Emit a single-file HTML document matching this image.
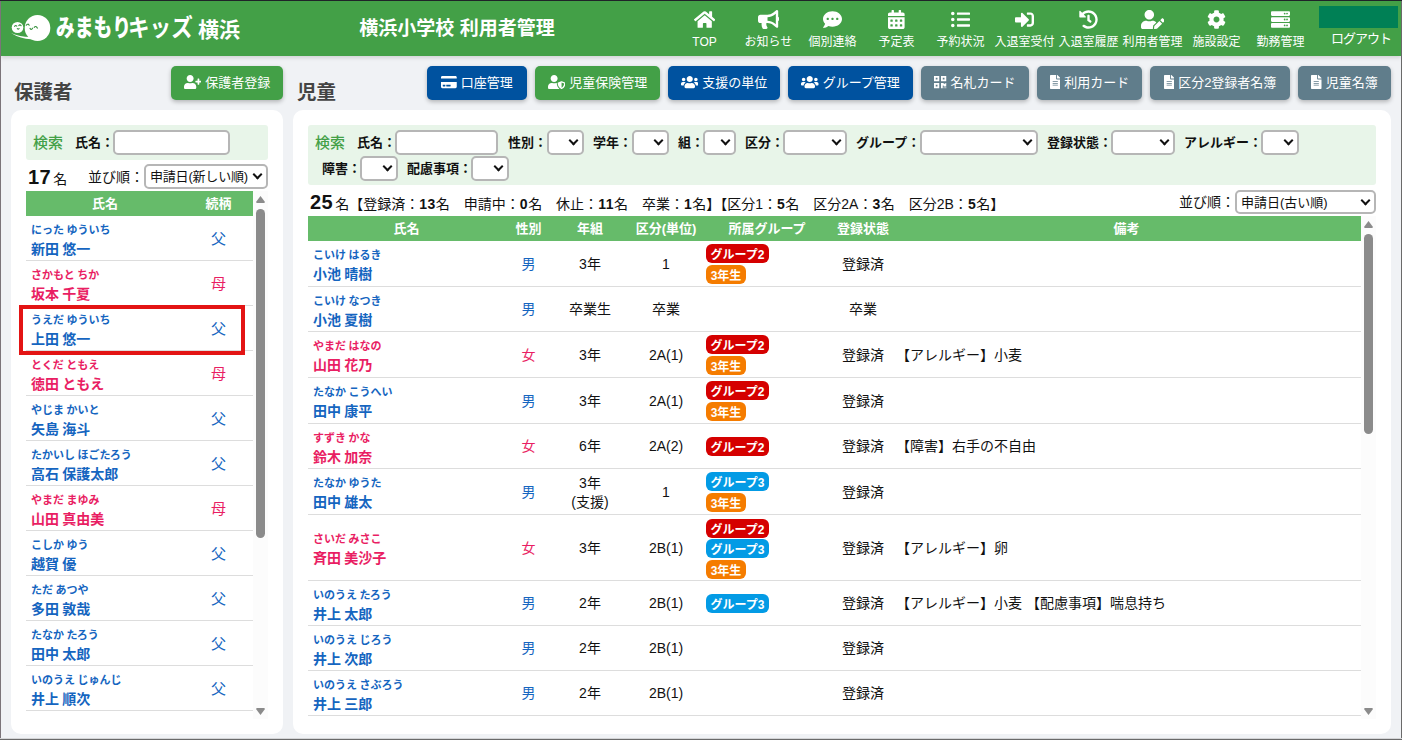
<!DOCTYPE html>
<html lang="ja">
<head>
<meta charset="utf-8">
<title>横浜小学校 利用者管理</title>
<style>
*{box-sizing:border-box;margin:0;padding:0}
html,body{width:1402px;height:740px;overflow:hidden}
body{font-family:"Liberation Sans","Noto Sans CJK JP",sans-serif;background:#f0f2f5;color:#111;position:relative;font-size:14px}
.abs{position:absolute}
#ftop{left:0;top:0;width:1402px;height:1px;background:#1f2328;z-index:50}
#fleft{left:0;top:1px;width:1px;height:739px;background:#7b7479;z-index:50}
#fright{left:1401px;top:1px;width:1px;height:739px;background:#6a6a6a;z-index:50}
#fbot{left:0;top:738px;width:1402px;height:2px;background:linear-gradient(180deg,#d4d5d7 0,#d4d5d7 50%,#6a6a6a 50%);z-index:50}
#hdr{left:1px;top:1px;width:1400px;height:55px;background:#43a047;box-shadow:0 2px 4px rgba(0,0,0,.13);z-index:10;color:#fff}
#logo-txt{left:55px;top:9px;font-weight:700;line-height:36px;height:36px;white-space:nowrap;font-size:0}
#logo-txt span{position:relative;display:inline-block;vertical-align:top;line-height:36px;height:36px;transform-origin:0 50%;overflow:visible}
#ttl{left:258px;top:10px;width:396px;text-align:center;font-size:19px;font-weight:700;line-height:36px;white-space:nowrap}
.nav{top:0;width:64px;height:55px;text-align:center}
.nav svg{position:absolute;left:0;right:0;margin:0 auto;top:9px;fill:#fff}
.nav span{position:absolute;left:-10px;right:-10px;top:31px;font-size:12px;line-height:20px;white-space:nowrap}
#lo-box{left:1318px;top:5px;width:79px;height:22px;background:#008055}
#lo-txt{left:1321px;top:28px;width:78px;text-align:center;font-size:13px;line-height:20px;white-space:nowrap;letter-spacing:-1px}
.sect{font-size:19.5px;font-weight:700;color:#444;line-height:30px;top:77px}
.btn{top:66px;height:34px;border-radius:5px;color:#fff;font-size:13px;line-height:34px;text-align:center;white-space:nowrap;box-shadow:0 2px 4px rgba(0,0,0,.25);}
.btn svg{display:inline-block;vertical-align:-2px;fill:#fff;margin-right:4px}
.g{background:#43a047}.b{background:#00529f}.s{background:#607d8b}
.card{background:#fff;border-radius:10px;top:110px;height:624px}
.srch{background:#e8f5e9;border-radius:3px}
.k{color:#43a047;font-weight:500;font-size:15px;line-height:20px;white-space:nowrap}
.lbl{font-weight:700;font-size:13px;line-height:20px;white-space:nowrap}
.inp{background:#fff;border:2px solid #b6b6b6;border-radius:5px;height:25px}
.sel{background:#fff;border:2px solid #b6b6b6;border-radius:5px;height:25px;font-size:13.5px;line-height:21px;padding-left:4px;white-space:nowrap;overflow:hidden}
.sel i{position:absolute;right:5.5px;top:4.5px;width:7px;height:7px;border-right:2px solid #111;border-bottom:2px solid #111;transform:rotate(45deg);}
.cnt{font-size:14px;line-height:24px;white-space:nowrap}
.cnt b.big{font-size:20px}
.cnt b{font-weight:700;letter-spacing:.5px}
.th{background:#66bb6a;color:#fff;font-weight:700;font-size:13px;line-height:24px;text-align:center;white-space:nowrap}
.sb{background:#fcfcfc}
.sb .thumb{position:absolute;left:3px;width:9px;background:#8b8b8b;border-radius:4.5px}
.sb .up{position:absolute;left:3px;width:9px;height:7px;background:#8b8b8b;clip-path:polygon(50% 0,100% 85%,92% 100%,8% 100%,0 85%)}
.sb .dn{position:absolute;left:3px;width:9px;height:7px;background:#8b8b8b;clip-path:polygon(8% 0,92% 0,100% 15%,50% 100%,0 15%)}
.row{border-bottom:1px solid #ddd}
.m{color:#1565c0}.f{color:#e91e63}
.kana{font-size:11px;font-weight:700;line-height:16px;white-space:nowrap;word-spacing:-.6px}
.nm{font-size:14px;font-weight:700;line-height:20px;white-space:nowrap;word-spacing:-.7px}
.rel{font-size:15px;line-height:20px;text-align:center}
.c{position:absolute;text-align:center;font-size:14px;line-height:19px;white-space:nowrap}
.bd{position:absolute;left:706px;height:19px;border-radius:6px;color:#fff;font-size:12px;font-weight:700;line-height:22px;overflow:hidden;text-align:center;white-space:nowrap}
.r{background:#d50000}.bl{background:#039be5}.o{background:#f57c00}
</style>
</head>
<body>
<div id="ftop" class="abs"></div><div id="fleft" class="abs"></div><div id="fright" class="abs"></div><div id="fbot" class="abs"></div>
<div id="hdr" class="abs">
<svg class="abs" style="left:9px;top:12px" width="42" height="32" viewBox="0 0 42 32">
<ellipse cx="7.5" cy="14.5" rx="5.8" ry="5.6" fill="#fff"/>
<ellipse cx="27.5" cy="15" rx="12.8" ry="13" fill="#fff"/>
<path d="M1 20 Q12 27 24 26 L20 24 Q10 24 1 20Z" fill="#fff"/>
<path d="M16.200 12.300q1.600-2.200 3-.1M20 15.400q1.300 2 2.600-.2M24.200 14.400q1.600-2 3.200 .7M4.600 13.400q1-1.600 2.200-.2M8.800 12.600q1.100-1.500 2.300 .1M7.300 15.500q.9 1.300 1.800 0" stroke="#3a9440" stroke-width="1.100" fill="none" stroke-linecap="round"/>
</svg>
<div id="logo-txt" class="abs"><span style="width:72px;font-size:24px;font-weight:900;transform:scaleX(.78)">みまもり</span><span style="width:70px;font-size:24px;transform:scaleX(.9)">キッズ</span><span style="width:44px;font-size:21px;top:2px">横浜</span></div>
<div id="ttl" class="abs">横浜小学校 利用者管理</div>
<div class="abs nav" style="left:671.5px"><svg viewBox="0 0 576 512" width="21.38" height="19" style=""><path d="M280.37 148.26L96 300.11V464a16 16 0 0 0 16 16l112.06-.29a16 16 0 0 0 15.92-16V368a16 16 0 0 1 16-16h64a16 16 0 0 1 16 16v95.64a16 16 0 0 0 16 16.05L464 480a16 16 0 0 0 16-16V300L295.67 148.26a12.19 12.19 0 0 0-15.3 0zM571.6 251.47L488 182.56V44.05a12 12 0 0 0-12-12h-56a12 12 0 0 0-12 12v72.61L318.47 43a48 48 0 0 0-61 0L4.34 251.47a12 12 0 0 0-1.6 16.9l25.5 31A12 12 0 0 0 45.15 301l235.22-193.74a12.19 12.19 0 0 1 15.3 0L530.9 301a12 12 0 0 0 16.9-1.6l25.5-31a12 12 0 0 0-1.7-16.93z"/></svg><span>TOP</span></div>
<div class="abs nav" style="left:735.5px"><svg viewBox="0 0 576 512" width="21.38" height="19" style=""><path d="M576 240c0-23.63-12.95-44.04-32-55.12V32.01C544 23.26 537.02 0 512 0c-7.12 0-14.19 2.38-19.98 7.02l-85.03 68.03C364.28 109.19 310.66 128 256 128H64c-35.35 0-64 28.65-64 64v96c0 35.35 28.65 64 64 64h33.7c-1.39 10.48-2.18 21.14-2.18 32 0 39.77 9.26 77.35 25.56 110.94 5.19 10.69 16.52 17.06 28.4 17.06h74.28c26.05 0 41.69-29.84 25.9-50.56-16.4-21.52-26.15-48.36-26.15-77.44 0-11.11 1.62-21.79 4.41-32H256c54.66 0 108.28 18.81 150.98 52.95l85.03 68.03a32.023 32.023 0 0 0 19.98 7.02c24.92 0 32-22.78 32-32V295.13C563.05 284.04 576 263.63 576 240zm-96 141.42l-33.05-26.44C392.95 311.78 325.12 288 256 288v-96c69.12 0 136.95-23.78 190.95-66.98L480 98.58v282.84z"/></svg><span>お知らせ</span></div>
<div class="abs nav" style="left:799.5px"><svg viewBox="0 0 512 512" width="19.0" height="19" style=""><path d="M256 32C114.6 32 0 125.1 0 240c0 49.6 21.4 95 57 130.7C44.5 421.1 2.7 466 2.2 466.5c-2.2 2.3-2.8 5.7-1.5 8.7S4.8 480 8 480c66.3 0 116-31.8 140.6-51.4 32.7 12.3 69 19.4 107.4 19.4 141.4 0 256-93.1 256-208S397.4 32 256 32zM128 272c-17.7 0-32-14.3-32-32s14.3-32 32-32 32 14.3 32 32-14.3 32-32 32zm128 0c-17.7 0-32-14.3-32-32s14.3-32 32-32 32 14.3 32 32-14.3 32-32 32zm128 0c-17.7 0-32-14.3-32-32s14.3-32 32-32 32 14.3 32 32-14.3 32-32 32z"/></svg><span>個別連絡</span></div>
<div class="abs nav" style="left:863.5px"><svg viewBox="0 0 448 512" width="16.62" height="19" style=""><path d="M0 464c0 26.5 21.5 48 48 48h352c26.5 0 48-21.5 48-48V192H0v272zm320-196c0-6.6 5.4-12 12-12h40c6.6 0 12 5.4 12 12v40c0 6.6-5.4 12-12 12h-40c-6.6 0-12-5.4-12-12v-40zm0 128c0-6.6 5.4-12 12-12h40c6.6 0 12 5.4 12 12v40c0 6.6-5.4 12-12 12h-40c-6.6 0-12-5.4-12-12v-40zM192 268c0-6.6 5.4-12 12-12h40c6.6 0 12 5.4 12 12v40c0 6.6-5.4 12-12 12h-40c-6.6 0-12-5.4-12-12v-40zm0 128c0-6.6 5.4-12 12-12h40c6.6 0 12 5.4 12 12v40c0 6.6-5.4 12-12 12h-40c-6.6 0-12-5.4-12-12v-40zM64 268c0-6.6 5.4-12 12-12h40c6.6 0 12 5.4 12 12v40c0 6.6-5.4 12-12 12H76c-6.6 0-12-5.4-12-12v-40zm0 128c0-6.6 5.4-12 12-12h40c6.6 0 12 5.4 12 12v40c0 6.6-5.4 12-12 12H76c-6.6 0-12-5.4-12-12v-40zM400 64h-48V16c0-8.8-7.2-16-16-16h-32c-8.8 0-16 7.2-16 16v48H160V16c0-8.800-7.2-16-16-16h-32c-8.8 0-16 7.2-16 16v48H48C21.5 64 0 85.5 0 112v48h448v-48c0-26.5-21.5-48-48-48z"/></svg><span>予定表</span></div>
<div class="abs nav" style="left:927.5px"><svg viewBox="0 0 512 512" width="19.0" height="19" style=""><path d="M48 48a48 48 0 1 0 48 48 48 48 0 0 0-48-48zm0 160a48 48 0 1 0 48 48 48 48 0 0 0-48-48zm0 160a48 48 0 1 0 48 48 48 48 0 0 0-48-48zm448 16H176a16 16 0 0 0-16 16v32a16 16 0 0 0 16 16h320a16 16 0 0 0 16-16v-32a16 16 0 0 0-16-16zm0-320H176a16 16 0 0 0-16 16v32a16 16 0 0 0 16 16h320a16 16 0 0 0 16-16V80a16 16 0 0 0-16-16zm0 160H176a16 16 0 0 0-16 16v32a16 16 0 0 0 16 16h320a16 16 0 0 0 16-16v-32a16 16 0 0 0-16-16z"/></svg><span>予約状況</span></div>
<div class="abs nav" style="left:991.5px"><svg viewBox="0 0 512 512" width="19.0" height="19" style=""><path d="M416 448h-84c-6.6 0-12-5.4-12-12v-40c0-6.6 5.4-12 12-12h84c17.7 0 32-14.3 32-32V160c0-17.7-14.3-32-32-32h-84c-6.6 0-12-5.4-12-12V76c0-6.6 5.4-12 12-12h84c53 0 96 43 96 96v192c0 53-43 96-96 96zm-47-201L201 79c-15-15-41-4.5-41 17v96H24c-13.3 0-24 10.7-24 24v96c0 13.3 10.7 24 24 24h136v96c0 21.5 26 32 41 17l168-168c9.3-9.4 9.3-24.6 0-34z"/></svg><span>入退室受付</span></div>
<div class="abs nav" style="left:1055.5px"><svg viewBox="0 0 512 512" width="19.0" height="19" style=""><path d="M504 255.531c.253 136.64-111.18 248.372-247.82 248.468-59.015.042-113.223-20.53-155.822-54.911-11.077-8.94-11.905-25.541-1.839-35.607l11.267-11.267c8.609-8.609 22.353-9.551 31.891-1.984C173.062 425.135 212.781 440 256 440c101.705 0 184-82.311 184-184 0-101.705-82.311-184-184-184-48.814 0-93.149 18.969-126.068 49.932l50.754 50.754c10.08 10.08 2.941 27.314-11.313 27.314H24c-8.837 0-16-7.163-16-16V38.627c0-14.254 17.234-21.393 27.314-11.314l49.372 49.372C129.209 34.136 189.552 8 256 8c136.81 0 247.747 110.78 248 247.531zm-180.912 78.784l9.823-12.63c8.138-10.463 6.253-25.542-4.21-33.679L288 256.349V152c0-13.255-10.745-24-24-24h-16c-13.255 0-24 10.745-24 24v135.651l65.409 50.874c10.463 8.137 25.541 6.253 33.679-4.21z"/></svg><span>入退室履歴</span></div>
<div class="abs nav" style="left:1119.5px"><svg viewBox="0 0 640 512" width="23.75" height="19" style=""><path d="M224 256c70.7 0 128-57.3 128-128S294.7 0 224 0 96 57.3 96 128s57.3 128 128 128zm89.6 32h-16.700c-22.2 10.2-46.9 16-72.9 16s-50.6-5.8-72.9-16h-16.700C60.2 288 0 348.2 0 422.4V464c0 26.5 21.5 48 48 48h274.9c-2.4-6.8-3.4-14-2.6-21.3l6.8-60.9 1.2-11.1 7.9-7.9 77.3-77.3c-24.5-27.7-60-45.5-99.9-45.500zm45.3 145.3l-6.8 61c-1.1 10.2 7.5 18.8 17.6 17.6l60.9-6.8 137.9-137.9-71.700-71.700-137.9 137.8zM633 268.9L595.1 231c-9.3-9.3-24.5-9.3-33.8 0l-37.8 37.8-4.1 4.1 71.800 71.700 41.800-41.800c9.3-9.4 9.3-24.5 0-33.900z"/></svg><span>利用者管理</span></div>
<div class="abs nav" style="left:1183.5px"><svg viewBox="0 0 512 512" width="19.0" height="19" style=""><path d="M487.4 315.7l-42.6-24.6c4.3-23.2 4.3-47 0-70.2l42.6-24.6c4.9-2.8 7.1-8.6 5.5-14-11.1-35.6-30-67.8-54.700-94.600-3.800-4.100-10-5.100-14.800-2.300L380.800 110c-17.900-15.400-38.500-27.300-60.800-35.100V25.800c0-5.600-3.900-10.500-9.400-11.700-36.700-8.200-74.300-7.800-109.200 0-5.500 1.200-9.400 6.100-9.400 11.700V75c-22.200 7.900-42.800 19.800-60.800 35.100L88.700 85.500c-4.900-2.800-11-1.900-14.800 2.300-24.700 26.700-43.600 58.900-54.700 94.600-1.700 5.400.6 11.200 5.500 14L67.300 221c-4.300 23.200-4.300 47 0 70.200l-42.600 24.600c-4.900 2.800-7.100 8.600-5.500 14 11.100 35.600 30 67.800 54.700 94.600 3.800 4.100 10 5.100 14.800 2.300l42.600-24.600c17.900 15.400 38.500 27.300 60.800 35.100v49.200c0 5.600 3.900 10.500 9.400 11.700 36.700 8.200 74.300 7.800 109.200 0 5.500-1.200 9.400-6.100 9.400-11.700v-49.200c22.200-7.900 42.800-19.800 60.800-35.100l42.600 24.600c4.900 2.800 11 1.900 14.800-2.300 24.700-26.700 43.600-58.900 54.700-94.600 1.500-5.500-.7-11.300-5.600-14.100zM256 336c-44.100 0-80-35.900-80-80s35.900-80 80-80 80 35.900 80 80-35.900 80-80 80z"/></svg><span>施設設定</span></div>
<div class="abs nav" style="left:1247.5px"><svg viewBox="0 0 512 512" width="19.0" height="19" style=""><path d="M480 160H32c-17.673 0-32-14.327-32-32V64c0-17.673 14.327-32 32-32h448c17.673 0 32 14.327 32 32v64c0 17.673-14.327 32-32 32zm-48-88c-13.255 0-24 10.745-24 24s10.745 24 24 24 24-10.745 24-24-10.745-24-24-24zm-64 0c-13.255 0-24 10.745-24 24s10.745 24 24 24 24-10.745 24-24-10.745-24-24-24zm112 248H32c-17.673 0-32-14.327-32-32v-64c0-17.673 14.327-32 32-32h448c17.673 0 32 14.327 32 32v64c0 17.673-14.327 32-32 32zm-48-88c-13.255 0-24 10.745-24 24s10.745 24 24 24 24-10.745 24-24-10.745-24-24-24zm-64 0c-13.255 0-24 10.745-24 24s10.745 24 24 24 24-10.745 24-24-10.745-24-24-24zm112 248H32c-17.673 0-32-14.327-32-32v-64c0-17.673 14.327-32 32-32h448c17.673 0 32 14.327 32 32v64c0 17.673-14.327 32-32 32zm-48-88c-13.255 0-24 10.745-24 24s10.745 24 24 24 24-10.745 24-24-10.745-24-24-24zm-64 0c-13.255 0-24 10.745-24 24s10.745 24 24 24 24-10.745 24-24-10.745-24-24-24z"/></svg><span>勤務管理</span></div>
<div id="lo-box" class="abs"></div><div id="lo-txt" class="abs">ログアウト</div>
</div>
<div class="abs sect" style="left:14px">保護者</div>
<div class="abs sect" style="left:297px">児童</div>
<div class="abs btn g" style="left:171px;width:112px;font-size:13px"><svg viewBox="0 0 640 512" width="17.5" height="14" style=""><path d="M624 208h-64v-64c0-8.8-7.2-16-16-16h-32c-8.8 0-16 7.2-16 16v64h-64c-8.8 0-16 7.2-16 16v32c0 8.8 7.2 16 16 16h64v64c0 8.8 7.2 16 16 16h32c8.8 0 16-7.2 16-16v-64h64c8.8 0 16-7.2 16-16v-32c0-8.8-7.2-16-16-16zm-400 48c70.7 0 128-57.3 128-128S294.7 0 224 0 96 57.3 96 128s57.3 128 128 128zm89.6 32h-16.7c-22.2 10.2-46.9 16-72.9 16s-50.6-5.8-72.9-16h-16.7C60.2 288 0 348.2 0 422.4V464c0 26.5 21.5 48 48 48h352c26.5 0 48-21.5 48-48v-41.6c0-74.2-60.2-134.4-134.4-134.4z"/></svg>保護者登録</div>
<div class="abs btn b" style="left:427px;width:100px;font-size:13px"><svg viewBox="0 0 576 512" width="15.75" height="14" style=""><path d="M0 432c0 26.5 21.5 48 48 48h480c26.5 0 48-21.5 48-48V256H0v176zm192-68c0-6.600 5.4-12 12-12h136c6.6 0 12 5.4 12 12v40c0 6.6-5.4 12-12 12H204c-6.6 0-12-5.4-12-12v-40zm-128 0c0-6.6 5.4-12 12-12h72c6.6 0 12 5.4 12 12v40c0 6.6-5.4 12-12 12H76c-6.6 0-12-5.4-12-12v-40zM576 80v48H0V80c0-26.5 21.5-48 48-48h480c26.5 0 48 21.5 48 48z"/></svg>口座管理</div>
<div class="abs btn g" style="left:535px;width:125px;font-size:13px"><svg viewBox="0 0 640 512" width="17.5" height="14" style=""><path d="M622.3 271.1l-115.200-45c-4.100-1.600-12.600-3.700-22.200 0l-115.200 45c-10.700 4.200-17.700 14-17.700 24.900 0 111.600 68.700 188.800 132.900 213.900 9.600 3.700 18 1.600 22.200 0C558.4 489.9 640 420.5 640 296c0-10.900-7-20.700-17.700-24.900zM496 462.4V273.3l95.500 37.300c-5.600 87.100-60.900 135.400-95.500 151.800zM224 256c70.700 0 128-57.300 128-128S294.7 0 224 0 96 57.3 96 128s57.3 128 128 128zm96 40c0-2.500.8-4.800 1.100-7.200-2.500-.1-4.900-.8-7.500-.8h-16.700c-22.2 10.2-46.900 16-72.900 16s-50.600-5.800-72.900-16h-16.700C60.2 288 0 348.2 0 422.4V464c0 26.500 21.500 48 48 48h352c6.800 0 13.300-1.500 19.200-4-54-42.900-99.200-116.700-99.200-212z"/></svg>児童保険管理</div>
<div class="abs btn b" style="left:668px;width:112px;font-size:13px"><svg viewBox="0 0 640 512" width="17.5" height="14" style=""><path d="M96 224c35.3 0 64-28.7 64-64s-28.7-64-64-64-64 28.7-64 64 28.7 64 64 64zm448 0c35.3 0 64-28.7 64-64s-28.7-64-64-64-64 28.7-64 64 28.7 64 64 64zm32 32h-64c-17.600 0-33.500 7.100-45.100 18.600 40.300 22.100 68.900 62 75.100 109.400h66c17.700 0 32-14.300 32-32v-32c0-35.300-28.700-64-64-64zm-256 0c61.900 0 112-50.100 112-112S381.9 32 320 32 208 82.1 208 144s50.100 112 112 112zm76.800 32h-8.300c-20.800 10-43.900 16-68.500 16s-47.600-6-68.500-16h-8.300C179.6 288 128 339.6 128 403.2V432c0 26.500 21.500 48 48 48h288c26.500 0 48-21.500 48-48v-28.800c0-63.600-51.600-115.200-115.200-115.200zm-223.700-13.400C161.5 263.1 145.6 256 128 256H64c-35.3 0-64 28.700-64 64v32c0 17.700 14.300 32 32 32h65.900c6.300-47.400 34.900-87.300 75.200-109.400z"/></svg>支援の単位</div>
<div class="abs btn b" style="left:788px;width:125px;font-size:13px"><svg viewBox="0 0 640 512" width="17.5" height="14" style=""><path d="M96 224c35.3 0 64-28.7 64-64s-28.7-64-64-64-64 28.7-64 64 28.7 64 64 64zm448 0c35.3 0 64-28.7 64-64s-28.7-64-64-64-64 28.7-64 64 28.7 64 64 64zm32 32h-64c-17.600 0-33.500 7.100-45.100 18.600 40.300 22.100 68.900 62 75.100 109.400h66c17.700 0 32-14.300 32-32v-32c0-35.300-28.700-64-64-64zm-256 0c61.900 0 112-50.100 112-112S381.9 32 320 32 208 82.1 208 144s50.100 112 112 112zm76.800 32h-8.300c-20.800 10-43.900 16-68.500 16s-47.600-6-68.500-16h-8.300C179.6 288 128 339.6 128 403.2V432c0 26.500 21.500 48 48 48h288c26.500 0 48-21.500 48-48v-28.800c0-63.600-51.600-115.200-115.200-115.200zm-223.700-13.400C161.5 263.1 145.6 256 128 256H64c-35.3 0-64 28.700-64 64v32c0 17.700 14.300 32 32 32h65.900c6.300-47.400 34.900-87.300 75.200-109.400z"/></svg>グループ管理</div>
<div class="abs btn s" style="left:921px;width:108px;font-size:13px"><svg viewBox="0 0 448 512" width="12.25" height="14" style=""><path d="M0 224h192V32H0v192zM64 96h64v64H64V96zm192-64v192h192V32H256zm128 128h-64V96h64v64zM0 480h192V288H0v192zm64-128h64v64H64v-64zm352-64h32v128h-96v-32h-32v96h-64V288h96v32h64v-32zm0 160h32v32h-32v-32zm-64 0h32v32h-32v-32z"/></svg>名札カード</div>
<div class="abs btn s" style="left:1037px;width:105px;font-size:13px"><svg viewBox="0 0 384 512" width="10.5" height="14" style=""><path d="M224 136V0H24C10.7 0 0 10.7 0 24v464c0 13.3 10.7 24 24 24h336c13.300 0 24-10.700 24-24V160H248c-13.200 0-24-10.800-24-24zm64 236c0 6.600-5.400 12-12 12H108c-6.600 0-12-5.400-12-12v-8c0-6.600 5.400-12 12-12h168c6.600 0 12 5.400 12 12v8zm0-64c0 6.600-5.400 12-12 12H108c-6.600 0-12-5.400-12-12v-8c0-6.600 5.400-12 12-12h168c6.600 0 12 5.400 12 12v8zm0-72v8c0 6.600-5.400 12-12 12H108c-6.600 0-12-5.400-12-12v-8c0-6.600 5.400-12 12-12h168c6.600 0 12 5.400 12 12zm96-114.100v6.100H256V0h6.100c6.400 0 12.500 2.500 17 7l97.900 98c4.500 4.500 7 10.600 7 16.900z"/></svg>利用カード</div>
<div class="abs btn s" style="left:1150px;width:140px;font-size:13px"><svg viewBox="0 0 384 512" width="10.5" height="14" style=""><path d="M224 136V0H24C10.7 0 0 10.7 0 24v464c0 13.3 10.7 24 24 24h336c13.300 0 24-10.700 24-24V160H248c-13.200 0-24-10.800-24-24zm64 236c0 6.600-5.400 12-12 12H108c-6.600 0-12-5.400-12-12v-8c0-6.600 5.400-12 12-12h168c6.600 0 12 5.400 12 12v8zm0-64c0 6.600-5.400 12-12 12H108c-6.600 0-12-5.400-12-12v-8c0-6.600 5.400-12 12-12h168c6.600 0 12 5.400 12 12v8zm0-72v8c0 6.600-5.400 12-12 12H108c-6.600 0-12-5.400-12-12v-8c0-6.600 5.400-12 12-12h168c6.600 0 12 5.400 12 12zm96-114.100v6.100H256V0h6.100c6.400 0 12.500 2.500 17 7l97.900 98c4.500 4.500 7 10.600 7 16.900z"/></svg>区分2登録者名簿</div>
<div class="abs btn s" style="left:1298px;width:93px;font-size:13px"><svg viewBox="0 0 384 512" width="10.5" height="14" style=""><path d="M224 136V0H24C10.7 0 0 10.7 0 24v464c0 13.3 10.7 24 24 24h336c13.300 0 24-10.700 24-24V160H248c-13.200 0-24-10.800-24-24zm64 236c0 6.600-5.400 12-12 12H108c-6.600 0-12-5.400-12-12v-8c0-6.600 5.400-12 12-12h168c6.600 0 12 5.400 12 12v8zm0-64c0 6.600-5.400 12-12 12H108c-6.600 0-12-5.400-12-12v-8c0-6.600 5.400-12 12-12h168c6.600 0 12 5.400 12 12v8zm0-72v8c0 6.600-5.400 12-12 12H108c-6.600 0-12-5.400-12-12v-8c0-6.600 5.400-12 12-12h168c6.600 0 12 5.400 12 12zm96-114.100v6.100H256V0h6.100c6.400 0 12.500 2.500 17 7l97.900 98c4.500 4.500 7 10.600 7 16.900z"/></svg>児童名簿</div>
<div class="abs card" style="left:11px;width:272px">
<div class="abs srch" style="left:15px;top:15px;width:242px;height:35px"></div>
<div class="abs k" style="left:22px;top:23px">検索</div>
<div class="abs lbl" style="left:64px;top:23px">氏名：</div>
<div class="abs inp" style="left:102px;top:20px;width:117px"></div>
<div class="abs cnt" style="left:17px;top:55px"><b class="big">17</b><span style="margin-left:2px">名</span></div>
<div class="abs cnt" style="left:77px;top:55px;font-size:14px">並び順：</div>
<div class="abs sel" style="left:133px;top:54px;width:124px;height:25px"><span style="font-size:13px;letter-spacing:-.2px">申請日(新しい順)</span><i></i></div>
<div class="abs th" style="left:15px;top:81px;width:227px;height:25px;line-height:26px"><span class="abs" style="left:0;width:158px">氏名</span><span class="abs" style="left:158px;width:69px">続柄</span></div>
<div class="abs sb" style="left:242px;top:81px;width:15px;height:528px"><div class="up" style="top:5px"></div><div class="thumb" style="top:18px;height:329px"></div><div class="dn" style="top:517px"></div></div>
<div class="abs row m" style="left:15px;top:106px;width:227px;height:45px"><div class="abs kana" style="left:5px;top:6px">にった ゆういち</div><div class="abs nm" style="left:5px;top:22.5px">新田 悠一</div><div class="abs rel" style="left:158px;top:13px;width:69px">父</div></div>
<div class="abs row f" style="left:15px;top:151px;width:227px;height:45px"><div class="abs kana" style="left:5px;top:6px">さかもと ちか</div><div class="abs nm" style="left:5px;top:22.5px">坂本 千夏</div><div class="abs rel" style="left:158px;top:13px;width:69px">母</div></div>
<div class="abs row m" style="left:15px;top:196px;width:227px;height:45px"><div class="abs kana" style="left:5px;top:6px">うえだ ゆういち</div><div class="abs nm" style="left:5px;top:22.5px">上田 悠一</div><div class="abs rel" style="left:158px;top:13px;width:69px">父</div></div>
<div class="abs row f" style="left:15px;top:241px;width:227px;height:45px"><div class="abs kana" style="left:5px;top:6px">とくだ ともえ</div><div class="abs nm" style="left:5px;top:22.5px">徳田 ともえ</div><div class="abs rel" style="left:158px;top:13px;width:69px">母</div></div>
<div class="abs row m" style="left:15px;top:286px;width:227px;height:45px"><div class="abs kana" style="left:5px;top:6px">やじま かいと</div><div class="abs nm" style="left:5px;top:22.5px">矢島 海斗</div><div class="abs rel" style="left:158px;top:13px;width:69px">父</div></div>
<div class="abs row m" style="left:15px;top:331px;width:227px;height:45px"><div class="abs kana" style="left:5px;top:6px">たかいし ほごたろう</div><div class="abs nm" style="left:5px;top:22.5px">高石 保護太郎</div><div class="abs rel" style="left:158px;top:13px;width:69px">父</div></div>
<div class="abs row f" style="left:15px;top:376px;width:227px;height:45px"><div class="abs kana" style="left:5px;top:6px">やまだ まゆみ</div><div class="abs nm" style="left:5px;top:22.5px">山田 真由美</div><div class="abs rel" style="left:158px;top:13px;width:69px">母</div></div>
<div class="abs row m" style="left:15px;top:421px;width:227px;height:45px"><div class="abs kana" style="left:5px;top:6px">こしか ゆう</div><div class="abs nm" style="left:5px;top:22.5px">越賀 優</div><div class="abs rel" style="left:158px;top:13px;width:69px">父</div></div>
<div class="abs row m" style="left:15px;top:466px;width:227px;height:45px"><div class="abs kana" style="left:5px;top:6px">ただ あつや</div><div class="abs nm" style="left:5px;top:22.5px">多田 敦哉</div><div class="abs rel" style="left:158px;top:13px;width:69px">父</div></div>
<div class="abs row m" style="left:15px;top:511px;width:227px;height:45px"><div class="abs kana" style="left:5px;top:6px">たなか たろう</div><div class="abs nm" style="left:5px;top:22.5px">田中 太郎</div><div class="abs rel" style="left:158px;top:13px;width:69px">父</div></div>
<div class="abs row m" style="left:15px;top:556px;width:227px;height:45px"><div class="abs kana" style="left:5px;top:6px">いのうえ じゅんじ</div><div class="abs nm" style="left:5px;top:22.5px">井上 順次</div><div class="abs rel" style="left:158px;top:13px;width:69px">父</div></div>
<div class="abs" style="left:8px;top:195px;width:226px;height:50px;border:4px solid #e31414"></div>
</div>
<div class="abs card" style="left:293px;width:1098px">
<div class="abs srch" style="left:15px;top:15px;width:1068px;height:60px"></div>
<div class="abs k" style="left:22px;top:23px">検索</div>
<div class="abs lbl" style="left:64px;top:23px">氏名：</div>
<div class="abs inp" style="left:102px;top:20px;width:103px"></div>
<div class="abs lbl" style="left:215px;top:23px">性別：</div>
<div class="abs sel" style="left:254px;top:20px;width:37px;height:25px"><i></i></div>
<div class="abs lbl" style="left:300px;top:23px">学年：</div>
<div class="abs sel" style="left:339px;top:20px;width:37px;height:25px"><i></i></div>
<div class="abs lbl" style="left:385px;top:23px">組：</div>
<div class="abs sel" style="left:410px;top:20px;width:33px;height:25px"><i></i></div>
<div class="abs lbl" style="left:452px;top:23px">区分：</div>
<div class="abs sel" style="left:490px;top:20px;width:64px;height:25px"><i></i></div>
<div class="abs lbl" style="left:563px;top:23px">グループ：</div>
<div class="abs sel" style="left:627px;top:20px;width:118px;height:25px"><i></i></div>
<div class="abs lbl" style="left:754px;top:23px">登録状態：</div>
<div class="abs sel" style="left:818px;top:20px;width:64px;height:25px"><i></i></div>
<div class="abs lbl" style="left:891px;top:23px">アレルギー：</div>
<div class="abs sel" style="left:968px;top:20px;width:38px;height:25px"><i></i></div>
<div class="abs lbl" style="left:29px;top:49px">障害：</div>
<div class="abs sel" style="left:67px;top:46px;width:38px;height:25px"><i></i></div>
<div class="abs lbl" style="left:114px;top:49px">配慮事項：</div>
<div class="abs sel" style="left:178px;top:46px;width:38px;height:25px"><i></i></div>
<div class="abs cnt" style="left:17px;top:80px"><b class="big">25</b><span style="margin-left:2px">名</span>【登録済：<b>13</b>名　申請中：<b>0</b>名　休止：<b>11</b>名　卒業：<b>1</b>名】【区分1：<b>5</b>名　区分2A：<b>3</b>名　区分2B：<b>5</b>名】</div>
<div class="abs cnt" style="left:886px;top:80px">並び順：</div>
<div class="abs sel" style="left:942px;top:80px;width:141px;height:24px"><span style="font-size:13px">申請日(古い順)</span><i></i></div>
<div class="abs th" style="left:15px;top:106px;width:1053px;height:25px;line-height:26px">
<span class="abs" style="left:0px;width:197px">氏名</span>
<span class="abs" style="left:197px;width:47px">性別</span>
<span class="abs" style="left:244px;width:76px">年組</span>
<span class="abs" style="left:320px;width:76px">区分(単位)</span>
<span class="abs" style="left:396px;width:126px">所属グループ</span>
<span class="abs" style="left:522px;width:66px">登録状態</span>
<span class="abs" style="left:588px;width:461px">備考</span>
</div>
<div class="abs sb" style="left:1068px;top:106px;width:15px;height:503px"><div class="up" style="top:5px"></div><div class="thumb" style="top:18px;height:200px"></div><div class="dn" style="top:492px"></div></div>
<div class="abs row" style="left:15px;top:131px;width:1053px;height:46px">
<div class="abs kana m" style="left:5px;top:6px">こいけ はるき</div><div class="abs nm m" style="left:5px;top:23px">小池 晴樹</div>
<div class="c m" style="left:197px;width:47px;top:13.5px">男</div>
<div class="c" style="left:244px;width:76px;top:13.5px">3年</div>
<div class="c" style="left:320px;width:76px;top:13.5px">1</div>
<div class="bd r" style="left:398px;top:3.0px;width:63px">グループ2</div>
<div class="bd o" style="left:398px;top:24.0px;width:40px">3年生</div>
<div class="c" style="left:522px;width:66px;top:13.5px">登録済</div>
</div>
<div class="abs row" style="left:15px;top:177px;width:1053px;height:45px">
<div class="abs kana m" style="left:5px;top:6px">こいけ なつき</div><div class="abs nm m" style="left:5px;top:23px">小池 夏樹</div>
<div class="c m" style="left:197px;width:47px;top:13.0px">男</div>
<div class="c" style="left:244px;width:76px;top:13.0px">卒業生</div>
<div class="c" style="left:320px;width:76px;top:13.0px">卒業</div>
<div class="c" style="left:522px;width:66px;top:13.0px">卒業</div>
</div>
<div class="abs row" style="left:15px;top:222px;width:1053px;height:46px">
<div class="abs kana f" style="left:5px;top:6px">やまだ はなの</div><div class="abs nm f" style="left:5px;top:23px">山田 花乃</div>
<div class="c f" style="left:197px;width:47px;top:13.5px">女</div>
<div class="c" style="left:244px;width:76px;top:13.5px">3年</div>
<div class="c" style="left:320px;width:76px;top:13.5px">2A(1)</div>
<div class="bd r" style="left:398px;top:3.0px;width:63px">グループ2</div>
<div class="bd o" style="left:398px;top:24.0px;width:40px">3年生</div>
<div class="c" style="left:522px;width:66px;top:13.5px">登録済</div>
<div class="c" style="left:588px;text-align:left;top:13.5px">【アレルギー】小麦</div>
</div>
<div class="abs row" style="left:15px;top:268px;width:1053px;height:46px">
<div class="abs kana m" style="left:5px;top:6px">たなか こうへい</div><div class="abs nm m" style="left:5px;top:23px">田中 康平</div>
<div class="c m" style="left:197px;width:47px;top:13.5px">男</div>
<div class="c" style="left:244px;width:76px;top:13.5px">3年</div>
<div class="c" style="left:320px;width:76px;top:13.5px">2A(1)</div>
<div class="bd r" style="left:398px;top:3.0px;width:63px">グループ2</div>
<div class="bd o" style="left:398px;top:24.0px;width:40px">3年生</div>
<div class="c" style="left:522px;width:66px;top:13.5px">登録済</div>
</div>
<div class="abs row" style="left:15px;top:314px;width:1053px;height:45px">
<div class="abs kana f" style="left:5px;top:6px">すずき かな</div><div class="abs nm f" style="left:5px;top:23px">鈴木 加奈</div>
<div class="c f" style="left:197px;width:47px;top:13.0px">女</div>
<div class="c" style="left:244px;width:76px;top:13.0px">6年</div>
<div class="c" style="left:320px;width:76px;top:13.0px">2A(2)</div>
<div class="bd r" style="left:398px;top:12.8px;width:63px">グループ2</div>
<div class="c" style="left:522px;width:66px;top:13.0px">登録済</div>
<div class="c" style="left:588px;text-align:left;top:13.0px">【障害】右手の不自由</div>
</div>
<div class="abs row" style="left:15px;top:359px;width:1053px;height:46px">
<div class="abs kana m" style="left:5px;top:6px">たなか ゆうた</div><div class="abs nm m" style="left:5px;top:23px">田中 雄太</div>
<div class="c m" style="left:197px;width:47px;top:13.5px">男</div>
<div class="c" style="left:244px;width:76px;top:4.5px">3年<br>(支援)</div>
<div class="c" style="left:320px;width:76px;top:13.5px">1</div>
<div class="bd bl" style="left:398px;top:3.0px;width:63px">グループ3</div>
<div class="bd o" style="left:398px;top:24.0px;width:40px">3年生</div>
<div class="c" style="left:522px;width:66px;top:13.5px">登録済</div>
</div>
<div class="abs row" style="left:15px;top:405px;width:1053px;height:66px">
<div class="abs kana f" style="left:5px;top:16px">さいだ みさこ</div><div class="abs nm f" style="left:5px;top:33px">斉田 美沙子</div>
<div class="c f" style="left:197px;width:47px;top:23.5px">女</div>
<div class="c" style="left:244px;width:76px;top:23.5px">3年</div>
<div class="c" style="left:320px;width:76px;top:23.5px">2B(1)</div>
<div class="bd r" style="left:398px;top:3.8px;width:63px">グループ2</div>
<div class="bd bl" style="left:398px;top:24.4px;width:63px">グループ3</div>
<div class="bd o" style="left:398px;top:45.0px;width:40px">3年生</div>
<div class="c" style="left:522px;width:66px;top:23.5px">登録済</div>
<div class="c" style="left:588px;text-align:left;top:23.5px">【アレルギー】卵</div>
</div>
<div class="abs row" style="left:15px;top:471px;width:1053px;height:45px">
<div class="abs kana m" style="left:5px;top:6px">いのうえ たろう</div><div class="abs nm m" style="left:5px;top:23px">井上 太郎</div>
<div class="c m" style="left:197px;width:47px;top:13.0px">男</div>
<div class="c" style="left:244px;width:76px;top:13.0px">2年</div>
<div class="c" style="left:320px;width:76px;top:13.0px">2B(1)</div>
<div class="bd bl" style="left:398px;top:12.8px;width:63px">グループ3</div>
<div class="c" style="left:522px;width:66px;top:13.0px">登録済</div>
<div class="c" style="left:588px;text-align:left;top:13.0px">【アレルギー】小麦 【配慮事項】喘息持ち</div>
</div>
<div class="abs row" style="left:15px;top:516px;width:1053px;height:45px">
<div class="abs kana m" style="left:5px;top:6px">いのうえ じろう</div><div class="abs nm m" style="left:5px;top:23px">井上 次郎</div>
<div class="c m" style="left:197px;width:47px;top:13.0px">男</div>
<div class="c" style="left:244px;width:76px;top:13.0px">2年</div>
<div class="c" style="left:320px;width:76px;top:13.0px">2B(1)</div>
<div class="c" style="left:522px;width:66px;top:13.0px">登録済</div>
</div>
<div class="abs row" style="left:15px;top:561px;width:1053px;height:45px">
<div class="abs kana m" style="left:5px;top:6px">いのうえ さぶろう</div><div class="abs nm m" style="left:5px;top:23px">井上 三郎</div>
<div class="c m" style="left:197px;width:47px;top:13.0px">男</div>
<div class="c" style="left:244px;width:76px;top:13.0px">2年</div>
<div class="c" style="left:320px;width:76px;top:13.0px">2B(1)</div>
<div class="c" style="left:522px;width:66px;top:13.0px">登録済</div>
</div>
</div>
</body>
</html>
